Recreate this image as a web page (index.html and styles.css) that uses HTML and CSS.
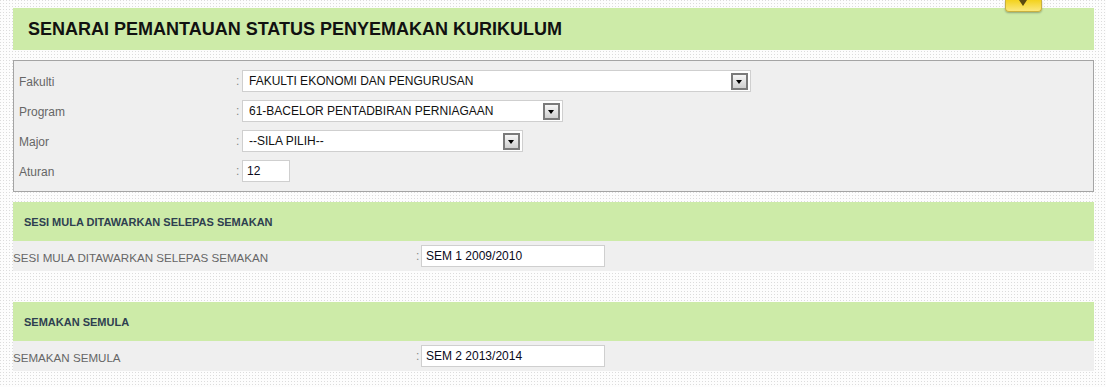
FILE: index.html
```html
<!DOCTYPE html>
<html lang="ms">
<head>
    <meta charset="UTF-8">
    <title>Senarai Pemantauan Status Penyemakan Kurikulum</title>
    <link rel="stylesheet" href="styles.css">
</head>
<body>
    <div class="tab"><span class="tab_arrow"></span></div>

    <div class="page_title">SENARAI PEMANTAUAN STATUS PENYEMAKAN KURIKULUM</div>

    <div class="filter_box">
        <div class="frow">
            <div class="flabel">Fakulti</div>
            <div class="colon">:</div>
            <div class="fselect w_fakulti"><span>FAKULTI EKONOMI DAN PENGURUSAN</span><span class="drop"></span></div>
        </div>
        <div class="frow">
            <div class="flabel">Program</div>
            <div class="colon">:</div>
            <div class="fselect w_program"><span>61-BACELOR PENTADBIRAN PERNIAGAAN</span><span class="drop"></span></div>
        </div>
        <div class="frow">
            <div class="flabel">Major</div>
            <div class="colon">:</div>
            <div class="fselect w_major"><span>--SILA PILIH--</span><span class="drop"></span></div>
        </div>
        <div class="frow">
            <div class="flabel">Aturan</div>
            <div class="colon">:</div>
            <input class="ftext w_aturan" type="text" value="12">
        </div>
    </div>

    <div class="section">
        <div class="section_head">SESI MULA DITAWARKAN SELEPAS SEMAKAN</div>
        <div class="srow">
            <div class="slabel">SESI MULA DITAWARKAN SELEPAS SEMAKAN</div>
            <div class="colon">:</div>
            <input class="ftext w_sem" type="text" value="SEM 1 2009/2010">
        </div>
    </div>

    <div class="section">
        <div class="section_head">SEMAKAN SEMULA</div>
        <div class="srow">
            <div class="slabel">SEMAKAN SEMULA</div>
            <div class="colon">:</div>
            <input class="ftext w_sem" type="text" value="SEM 2 2013/2014">
        </div>
    </div>
</body>
</html>
```

FILE: styles.css
```css
body {
    margin: 0;
    padding: 8px 12px 0 13px;
    font-family: "Liberation Sans", Arial, sans-serif;
    font-size: 12px;
    background-color: #dcdcdc;
    background-image:
        linear-gradient(90deg, rgba(253,253,253,0) 1px, #fdfdfd 1px),
        linear-gradient(rgba(253,253,253,0) 1px, #fdfdfd 1px);
    background-size: 3px 3px;
}

.tab {
    position: absolute;
    top: 0;
    left: 1005px;
    width: 35px;
    height: 11px;
    border: 1px solid #c8b040;
    border-top: none;
    border-radius: 0 0 4px 4px;
    background: linear-gradient(#f3d21c, #fbe87c);
    box-shadow: 0 1px 2px rgba(0,0,0,0.3);
}
.tab_arrow {
    position: absolute;
    left: 13px;
    top: 0;
    border-left: 4px solid transparent;
    border-right: 4px solid transparent;
    border-top: 6px solid #5a4a10;
}

.page_title {
    height: 42px;
    line-height: 43px;
    padding-left: 15px;
    background-color: #cdeba8;
    font-size: 18px;
    font-weight: bold;
    color: #111;
}

.filter_box {
    margin-top: 10px;
    padding: 9px 5px;
    border: 1px solid #a4a4a4;
    background-color: #efefef;
    display: flex;
    flex-direction: column;
    gap: 8px;
}
.frow {
    display: flex;
    align-items: center;
    height: 22px;
}
.flabel {
    width: 217px;
    padding-top: 2px;
    color: #666;
}
.colon {
    width: 6px;
    color: #888;
}
.fselect {
    display: flex;
    align-items: center;
    height: 20px;
    padding-left: 6px;
    border: 1px solid #cfcfcf;
    background-color: #fff;
    color: #111;
}
.fselect span:first-child {
    flex: 1;
}
.drop {
    position: relative;
    width: 13px;
    height: 13px;
    margin-right: 2px;
    border: 2px solid #7a7a7a;
    background: linear-gradient(#f6f6f6, #cfcfcf);
}
.drop::after {
    content: "";
    position: absolute;
    left: 3px;
    top: 5px;
    border-left: 3.5px solid transparent;
    border-right: 3.5px solid transparent;
    border-top: 4px solid #000;
}
.w_fakulti { width: 501px; }
.w_program { width: 313px; }
.w_major { width: 273px; }

.ftext {
    box-sizing: border-box;
    height: 22px;
    margin: 0;
    padding: 0 0 0 4px;
    border: 1px solid #cfcfcf;
    background-color: #fff;
    font-family: "Liberation Sans", Arial, sans-serif;
    font-size: 12px;
    color: #0a0a1a;
}
.w_aturan { width: 48px; }
.w_sem { width: 184px; }

.section {
    margin-top: 10px;
}
.section + .section {
    margin-top: 31px;
}
.section_head {
    height: 39px;
    line-height: 40px;
    padding-left: 11px;
    background-color: #cdeba8;
    font-size: 11px;
    font-weight: bold;
    color: #2e4050;
}
.srow {
    display: flex;
    align-items: center;
    height: 30px;
    background-color: #efefef;
}
.slabel {
    width: 403px;
    padding-top: 2px;
    font-size: 11.6px;
    color: #666;
}
.srow .colon {
    width: 5px;
}
```
